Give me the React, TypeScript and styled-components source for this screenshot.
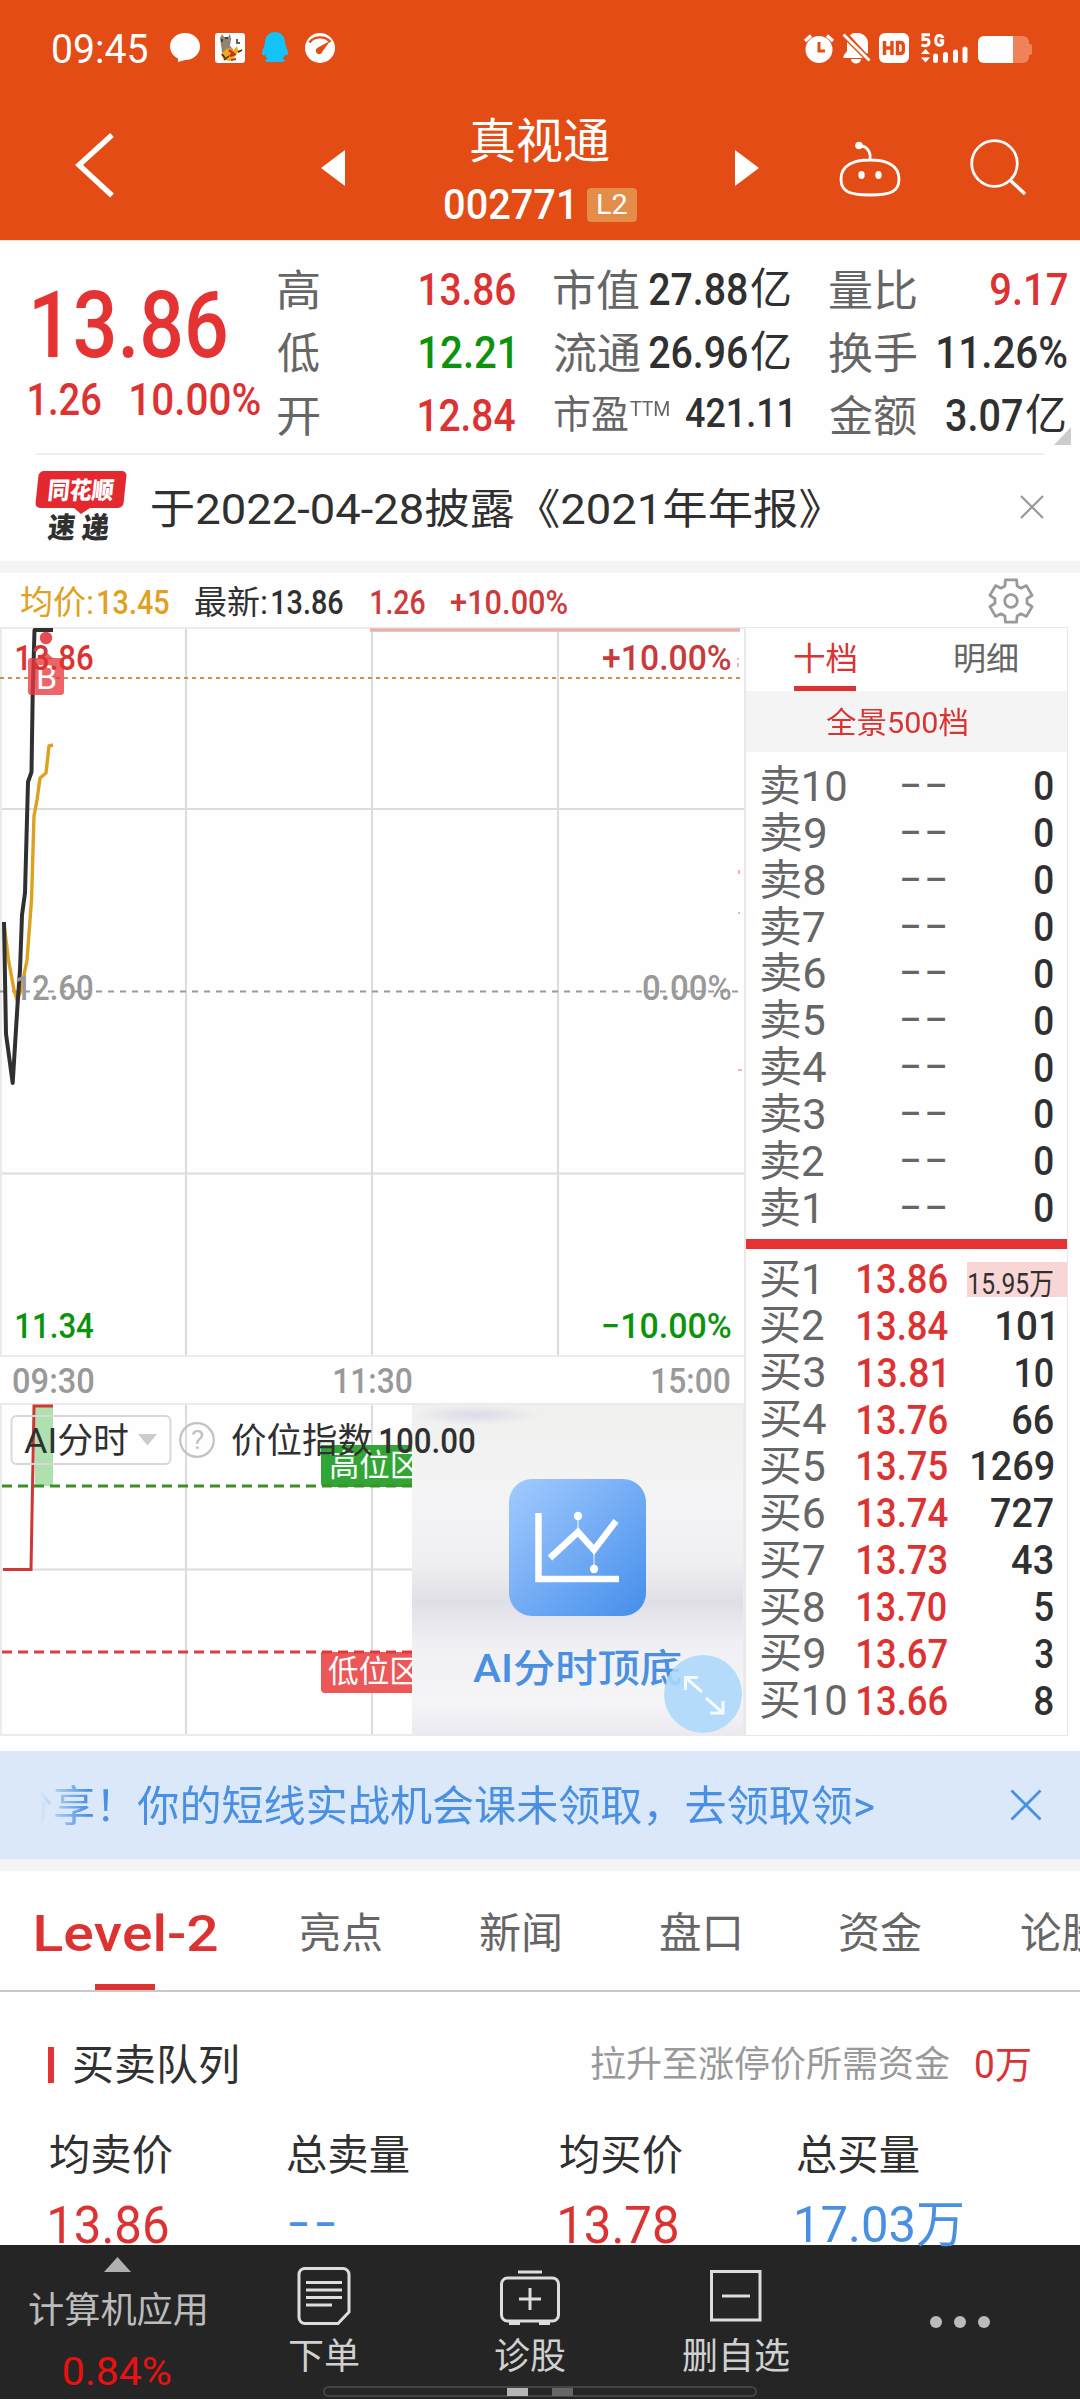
import React from "react";
import styled, { createGlobalStyle } from "styled-components";

const FAMILY = 'Roboto, "Noto Sans CJK SC", sans-serif';
const RED = "#dc3232";
const GREEN = "#0c930c";
const INK = "#303030";
const GREY = "#666";
const BLUE = "#4a90e2";

const GlobalStyle = createGlobalStyle`
  * { box-sizing: border-box; }
  body { margin: 0; background: #fff; font-family: ${FAMILY}; font-kerning: none; }
`;

/* ---------- width-fitted text ---------- */

const FitBox = styled.span<{ $w: number; $size: number; $ml: number; $mt: number }>`
  display: block;
  flex: none;
  width: ${(p) => p.$w}px;
  height: ${(p) => p.$size}px;
  margin-left: ${(p) => p.$ml}px;
  margin-top: ${(p) => p.$mt}px;
`;
const FitInk = styled.span<{ $size: number; $wt: number; $c: string }>`
  display: inline-block;
  white-space: pre;
  transform-origin: 0 50%;
  font-family: ${FAMILY};
  font-size: ${(p) => p.$size}px;
  line-height: ${(p) => p.$size}px;
  font-weight: ${(p) => p.$wt};
  color: ${(p) => p.$c};
`;

let ctx: CanvasRenderingContext2D | null = null;
function inkOf(text: string, size: number, wt: number) {
  if (!ctx) ctx = document.createElement("canvas").getContext("2d");
  if (!ctx) return { left: 0, width: text.length * size * 0.56 };
  ctx.font = `${wt} ${size}px ${FAMILY}`;
  ctx.fontKerning = "none";
  const m = ctx.measureText(text);
  return { left: m.actualBoundingBoxLeft, width: m.actualBoundingBoxLeft + m.actualBoundingBoxRight };
}

type FitProps = { t: string; w: number; size: number; wt?: number; c?: string; ml?: number; mt?: number; skew?: number };
function Fit({ t, w, size, wt = 400, c = INK, ml = 0, mt = 0, skew = 0 }: FitProps) {
  const ink = inkOf(t, size, wt);
  const s = w / ink.width;
  return (
    <FitBox $w={w} $size={size} $ml={ml} $mt={mt}>
      <FitInk
        $size={size}
        $wt={wt}
        $c={c}
        style={{ transform: `translateX(${ink.left * s}px) skewX(${-skew}deg) scaleX(${s})` }}
      >
        {t}
      </FitInk>
    </FitBox>
  );
}

/* ---------- shell ---------- */

const Screen = styled.div`
  width: 1080px;
  height: 2400px;
  overflow: hidden;
  background: #fefefe;
  display: flex;
  flex-direction: column;
`;
const Band = styled.div`
  flex: none;
  height: 12px;
  background: #f4f4f4;
`;
const Line = styled.div`
  flex: none;
  height: 2px;
  margin: 0 36px;
  background: #eee;
`;

/* ---------- header ---------- */

const Header = styled.header`
  flex: none;
  height: 241px;
  background: #e44c15;
  border-bottom: 1px solid #fde4d4;
`;
const StatusBar = styled.div`
  height: 96px;
  display: flex;
  align-items: center;
  padding: 0 48px 0 53px;
`;
const StatusIcons = styled.svg<{ $ml: number }>`
  display: block;
  flex: none;
  margin-left: ${(p) => p.$ml}px;
`;
const TitleBar = styled.div`
  height: 144px;
  padding-top: 2px;
  display: flex;
  align-items: flex-start;
`;
const Glyph = styled.svg<{ $ml?: number; $mt?: number }>`
  display: block;
  flex: none;
  margin-left: ${(p) => p.$ml ?? 0}px;
  margin-top: ${(p) => p.$mt ?? 0}px;
`;
const TitleStack = styled.div`
  flex: none;
  width: 192px;
  margin-left: 100px;
  padding-top: 20px;
  display: flex;
  flex-direction: column;
`;
const CodeRow = styled.div`
  display: flex;
  align-items: center;
  height: 34px;
  margin-top: 22px;
`;
const LevelBadge = styled.span`
  width: 50px;
  height: 34px;
  margin-left: 16px;
  border-radius: 4px;
  background: #e38d49;
  display: flex;
  align-items: center;
  justify-content: center;
`;

function StatusLeft() {
  return (
    <StatusIcons $ml={23} width="166" height="32" viewBox="170 32 166 32">
      <path d="M185 33c8.500 0 15 6 15 13.500S193.500 60 185 60L178 62v-3.500c-5-2.500-8-7-8-12C170 39 176.500 33 185 33z" fill="#fff" />
      <rect x="215" y="33" width="30" height="30" rx="3" fill="#fff" />
      <path d="M220 38l2-4 2 3h4l2-3 1 5-1 7 3 3-1 4-7 2-3-3z" fill="#8f8372" />
      <path d="M226 49l5-1 2 3 4-5 1 4 3 2-4 1-3 5-4 3-6-1-3-5z" fill="#f0a81c" />
      <path d="M229 50l4 3-3 3 6-2M231 60l5-1" stroke="#c4321c" strokeWidth="2.200" fill="none" />
      <path d="M222 39v3M225 38h3M237 39v3M236 43h4M224 60l5-4M222 54l3 4M238 52l4-2" stroke="#3a2a20" strokeWidth="1.500" fill="none" />
      <path d="M275 32c6 0 10 4.500 10 10.500 0 3.500 3 7 3 11 0 2-1.500 2.500-3 1-.5 1.500-1.500 3-2.500 4 3 1 3 3.500 0 3.500h-15c-3 0-3-2.500 0-3.500-1-1-2-2.500-2.500-4-1.500 1.500-3 1-3-1 0-4 3-7.500 3-11C265 36.500 269 32 275 32z" fill="#12c3f8" />
      <circle cx="320" cy="48" r="15" fill="#fff" />
      <path d="M309.500 42.500c4-6 15-7.500 21-.5" stroke="#e44c15" strokeWidth="2.400" fill="none" />
      <path d="M330 41l-7.500 10.500a3.400 3.400 0 1 1-4.500-4z" fill="#e44c15" />
    </StatusIcons>
  );
}

function StatusRight() {
  return (
    <StatusIcons $ml={467} width="230" height="32" viewBox="803 32 230 32">
      <circle cx="819" cy="49.500" r="13.500" fill="#fff" />
      <path d="M805 41l6-5.500M833 41l-6-5.500" stroke="#fff" strokeWidth="3.200" />
      <path d="M819 42v9h6" stroke="#e44c15" strokeWidth="3" fill="none" />
      <path d="M850 35.500c2-2 3-2.500 5-2.500h4c5 1 9 5 9 10v10l-1.500.5z" fill="#fff" />
      <path d="M847 42l16 16h-18c-2 0-2-2-.5-3.500l2.500-3.500zM851 59h10a5 4.500 0 0 1-10 0z" fill="#fff" />
      <path d="M843.500 34.500l26 26" stroke="#fff" strokeWidth="2.800" />
      <rect x="879" y="33" width="30" height="30" rx="6" fill="#fff" />
      <path d="M884.500 41v14M892 41v14M884.500 48h7.500M897.500 42.500h2.500c2.500 0 3.300 1.200 3.300 3v5c0 1.800-.8 3-3.300 3h-2.500z" stroke="#e44c15" strokeWidth="3.400" fill="none" />
      <path d="M930 34.800h-7v4.700c5-1 6 .3 6 2.700 0 3.500-4 4.500-7.500 2.500M942.700 38c-.8-3.500-7-4-7 2.300s7 6 7 2.500v-2h-3" stroke="#fff" strokeWidth="3" fill="none" />
      <path d="M921 54l4.500-5 4.500 5zM921 57.500h9l-4.500 5z" fill="#fff" />
      <path d="M935.500 56v4.500M945.500 54.500v6M955.500 52v8.500M965 49v11.500" stroke="#fff" strokeWidth="5" strokeLinecap="round" />
      <rect x="978" y="36" width="51" height="27" rx="6" fill="#ef8258" />
      <rect x="1026" y="44" width="6" height="11" rx="2" fill="#ef8258" />
      <path d="M984 36h29v27h-29a6 6 0 0 1-6-6V42a6 6 0 0 1 6-6z" fill="#fff" />
    </StatusIcons>
  );
}

/* ---------- quote ---------- */

const Quote = styled.section`
  flex: none;
  height: 212px;
  display: flex;
  align-items: flex-start;
  padding-top: 17px;
`;
const PriceBlock = styled.div`
  flex: none;
  width: 277px;
  padding: 22px 0 0 29px;
`;
const ChangeRow = styled.div`
  display: flex;
  margin-top: 6px;
`;
const StatColumn = styled.div<{ $w: number; $mr: number }>`
  flex: none;
  width: ${(p) => p.$w}px;
  margin-right: ${(p) => p.$mr}px;
`;
const StatRow = styled.div`
  height: 63px;
  display: flex;
  align-items: center;
`;
const Spring = styled.span`
  flex: 1;
`;

/* ---------- news ---------- */

const News = styled.section`
  flex: none;
  height: 106px;
  display: flex;
  align-items: flex-start;
  padding: 16px 0 0 37px;
`;
const BrandMark = styled.div`
  flex: none;
  width: 88px;
`;
const BrandTop = styled.div`
  height: 37px;
  display: flex;
  align-items: center;
  justify-content: center;
  border-radius: 5px;
  background: #e3292f;
  transform: skewX(-6deg);
`;

/* ---------- chart + book ---------- */

const Legend = styled.div`
  flex: none;
  height: 54px;
  display: flex;
  align-items: center;
`;
const Main = styled.section`
  flex: none;
  height: 1124px;
  display: flex;
`;
const ChartSide = styled.div`
  flex: none;
  width: 744px;
`;
const Chart = styled.svg`
  display: block;
`;
const Book = styled.div`
  flex: none;
  width: 324px;
  height: 1109px;
  border: 1px solid #e8e8e8;
  border-left-width: 2px;
`;
const BookTabs = styled.div`
  height: 63px;
  display: flex;
`;
const BookTab = styled.div<{ $ml: number; $active?: boolean }>`
  flex: none;
  width: 62px;
  margin-left: ${(p) => p.$ml}px;
  padding-top: 15px;
  border-bottom: ${(p) => (p.$active ? `5px solid ${RED}` : "none")};
`;
const Depth = styled.div`
  height: 61px;
  background: #f4f4f4;
  display: flex;
  align-items: center;
`;
const Rows = styled.div<{ $pt: number }>`
  padding-top: ${(p) => p.$pt}px;
`;
const BookRow = styled.div`
  height: 46.87px;
  display: flex;
  align-items: center;
  padding-left: 15px;
`;
const LabelCell = styled.div`
  flex: none;
  width: 97px;
`;
const PriceCell = styled.div<{ $dash?: boolean }>`
  flex: none;
  width: 109px;
  padding-left: ${(p) => (p.$dash ? 44 : 0)}px;
`;
const DashPair = styled.div<{ $gap: number; $pl?: number }>`
  display: flex;
  gap: ${(p) => p.$gap}px;
  padding-left: ${(p) => p.$pl ?? 0}px;
`;
const QtyCell = styled.div<{ $hot?: boolean }>`
  flex: none;
  width: 100px;
  height: ${(p) => (p.$hot ? 35 : 44)}px;
  padding-right: 14px;
  background: ${(p) => (p.$hot ? "#f9d6d6" : "transparent")};
  display: flex;
  align-items: center;
  justify-content: flex-end;
`;
const Divider = styled.div`
  height: 10px;
  margin-top: 7px;
  background: #e53333;
`;

const sells: [string, number][] = [
  ["卖10", 85], ["卖9", 64], ["卖8", 64], ["卖7", 63], ["卖6", 64],
  ["卖5", 63], ["卖4", 65], ["卖3", 63], ["卖2", 63], ["卖1", 55],
];
const buys: [string, number, string, number, string, number][] = [
  ["买1", 55, "13.86", 89, "15.95万", 84],
  ["买2", 63, "13.84", 90, "101", 56],
  ["买3", 63, "13.81", 86, "10", 37],
  ["买4", 65, "13.76", 89, "66", 40],
  ["买5", 63, "13.75", 89, "1269", 81],
  ["买6", 63, "13.74", 90, "727", 62],
  ["买7", 63, "13.73", 89, "43", 41],
  ["买8", 63, "13.70", 88, "5", 18],
  ["买9", 63, "13.67", 89, "3", 18],
  ["买10", 85, "13.66", 89, "8", 18],
];

type SvgTextProps = { x: number; y: number; w: number; s: number; c: string; wt?: number; children: string };
function Label({ x, y, w, s, c, wt = 500, children }: SvgTextProps) {
  const ink = inkOf(children, s, wt);
  const k = w / ink.width;
  return (
    <text transform={`translate(${x + ink.left * k} ${y}) scale(${k} 1)`} fontSize={s} fontWeight={wt} fill={c} fontFamily={FAMILY}>
      {children}
    </text>
  );
}

function MinuteChart() {
  return (
    <Chart width="744" height="776" viewBox="0 627 744 776">
      <g stroke="#dcdcdc" strokeWidth="2" fill="none">
        <path d="M186 628V1356M372 628V1356M558 628V1356M1 809H744M1 1173.500H744" />
        <path d="M0 628H744M1 628V1356M0 1356H744" stroke="#ebebeb" />
      </g>
      <path d="M0 678H740" stroke="#c4924e" strokeWidth="2" strokeDasharray="4 4" />
      <path d="M0 991.500H744" stroke="#999" strokeWidth="2" strokeDasharray="6 6" />
      <path d="M370 630H740" stroke="#e9b0b0" strokeWidth="3.500" />
      <path d="M4 924L8.500 960L14 990L17 1000L21 990L27 960L31.500 900L34 816L37 800L40 778L46 773L49 746L53 745" stroke="#dda020" strokeWidth="3.400" fill="none" strokeLinejoin="round" />
      <path d="M4 922L6 1034L12.700 1083L17.500 1005L20 970L22 915L25 893L28 782L31.500 772L32.700 694L34.500 630H53" stroke="#303030" strokeWidth="4" fill="none" strokeLinejoin="round" />
      <path d="M738 658v2M738 663v4M739 870v4M739 912v2M738 1070h4" stroke="#efb6b6" strokeWidth="2" />
      <circle cx="46" cy="638" r="6.200" fill="#e84c52" />
      <path d="M46 652l8 7H38z" fill="#ee6266" />
      <rect x="28" y="658" width="36" height="37" rx="3" fill="#e8393f" fillOpacity="0.780" />
      <Label x={38} y={689} w={18} s={34} c="#fff" wt={400}>B</Label>
      <Label x={16} y={670} w={77} s={35} c={RED}>13.86</Label>
      <Label x={603} y={670} w={128} s={35} c="#c93a3a">+10.00%</Label>
      <Label x={16} y={1000} w={77} s={35} c="#999">12.60</Label>
      <Label x={643} y={1000} w={88} s={35} c="#999">0.00%</Label>
      <Label x={16} y={1338} w={78} s={35} c={GREEN}>11.34</Label>
      <Label x={603} y={1338} w={128} s={35} c={GREEN}>−10.00%</Label>
      <Label x={13} y={1393} w={81} s={35} c="#999">09:30</Label>
      <Label x={334} y={1393} w={78} s={35} c="#999">11:30</Label>
      <Label x={652} y={1393} w={78} s={35} c="#999">15:00</Label>
    </Chart>
  );
}

function IndexChart() {
  return (
    <Chart width="744" height="333" viewBox="0 1403 744 333">
      <defs>
        <linearGradient id="tile" x1="0" y1="0" x2="1" y2="1">
          <stop offset="0" stopColor="#a3cbfe" />
          <stop offset="1" stopColor="#448eec" />
        </linearGradient>
        <linearGradient id="promo" x1="0" y1="0" x2="0" y2="1">
          <stop offset="0" stopColor="#f0f0ee" />
          <stop offset="0.300" stopColor="#f4f4f6" />
          <stop offset="0.480" stopColor="#efeff2" />
          <stop offset="0.600" stopColor="#dfdfe6" />
          <stop offset="0.720" stopColor="#f0eff3" />
          <stop offset="0.900" stopColor="#f5f4f7" />
          <stop offset="1" stopColor="#eceaf0" />
        </linearGradient>
        <radialGradient id="haze">
          <stop offset="0" stopColor="#dcdae8" />
          <stop offset="1" stopColor="#dcdae8" stopOpacity="0" />
        </radialGradient>
      </defs>
      <g stroke="#dcdcdc" strokeWidth="2" fill="none">
        <path d="M186 1404V1735M372 1404V1735M1 1569.500H744" />
        <path d="M0 1404H744M1 1404V1735M0 1735H744M743 1404V1735" stroke="#ebebeb" />
      </g>
      <rect x="35" y="1406" width="18" height="80" fill="#6cc96c" fillOpacity="0.550" />
      <path d="M321 1445H412V1487H325a4 4 0 0 1-4-4z" fill="#31a634" />
      <path d="M321 1652H412V1693H325a4 4 0 0 1-4-4z" fill="#ec5858" />
      <path d="M2 1486H412" stroke="#3c8f28" strokeWidth="3" strokeDasharray="10 6" />
      <path d="M2 1652H412" stroke="#dc3c3c" strokeWidth="3" strokeDasharray="10 6" />
      <path d="M3 1569.500H31L34 1406H53" stroke="#cf3636" strokeWidth="3" fill="none" />
      <Label x={330} y={1476} w={89} s={31} c="#fff" wt={400}>高位区</Label>
      <Label x={328} y={1682} w={91} s={31} c="#fff" wt={400}>低位区</Label>
      <rect x="412" y="1405" width="331" height="329" fill="url(#promo)" />
      <path d="M412 1405H540V1425H412z" fill="url(#haze)" />
      <rect x="509" y="1479" width="137" height="137" rx="23" fill="url(#tile)" />
      <g fill="none" stroke="#fff">
        <path d="M538.500 1513V1579H619" strokeWidth="6.500" />
        <path d="M550 1558L578 1532L594 1550L616 1521" strokeWidth="6.500" />
        <path d="M578 1516V1532M594 1550V1568" strokeWidth="1.600" strokeOpacity="0.600" />
      </g>
      <circle cx="578" cy="1516" r="4.200" fill="#fff" />
      <circle cx="594" cy="1569" r="4.200" fill="#fff" />
      <Label x={473} y={1682} w={208} s={39} c={BLUE}>AI分时顶底</Label>
      <circle cx="703" cy="1694" r="39" fill="#abd8fa" fillOpacity="0.880" />
      <path d="M702 1692L686 1678M685.500 1690V1677.500H698M706 1698L722 1712M723 1701V1713H710" stroke="#f2fbfe" strokeWidth="3" fill="none" />
      <rect x="11.500" y="1416" width="159" height="48" rx="5" fill="none" stroke="#d8d8d8" strokeWidth="2" />
      <Label x={24} y={1453} w={104} s={35} c={INK} wt={400}>AI分时</Label>
      <path d="M138 1434h19l-9.500 11.500z" fill="#ccc" />
      <circle cx="197" cy="1440" r="16.800" fill="none" stroke="#c2c2c2" strokeWidth="2.200" />
      <Label x={191} y={1449} w={13} s={26} c="#c2c2c2" wt={400}>?</Label>
      <Label x={232} y={1453} w={141} s={35} c={INK} wt={400}>价位指数</Label>
      <Label x={380} y={1453} w={95} s={35} c={INK}>100.00</Label>
    </Chart>
  );
}

function gearPath() {
  const pts: string[] = [];
  for (let k = 0; k < 6; k++) {
    const mid = k * 60 - 90;
    for (const [d, r] of [[-22, 16.2], [-15, 21.8], [15, 21.8], [22, 16.2]]) {
      const a = ((mid + d) * Math.PI) / 180;
      pts.push(`${(23 + r * Math.cos(a)).toFixed(1)} ${(23 + r * Math.sin(a)).toFixed(1)}`);
    }
  }
  return `M${pts.join("L")}Z`;
}

/* ---------- banner, tabs, queue ---------- */

const Banner = styled.section`
  flex: none;
  height: 108px;
  background: #dae8fa;
  display: flex;
  align-items: center;
`;
const Marquee = styled.div`
  flex: none;
  width: 838px;
  height: 60px;
  margin-left: 40px;
  overflow: hidden;
  display: flex;
  align-items: center;
  mask-image: linear-gradient(90deg, transparent 0, #000 48px);
`;
const Tabs = styled.nav`
  flex: none;
  height: 121px;
  display: flex;
  overflow: hidden;
  border-bottom: 2px solid #c9c9c9;
`;
const Tab = styled.div<{ $w: number; $ml: number }>`
  flex: none;
  width: ${(p) => p.$w}px;
  margin-left: ${(p) => p.$ml}px;
  display: flex;
  flex-direction: column;
  align-items: center;
  padding-top: 38px;
`;
const TabMark = styled.i`
  width: 60px;
  height: 6px;
  margin-top: auto;
  margin-right: 4px;
  background: ${RED};
`;
const QueueHead = styled.div`
  flex: none;
  height: 143px;
  display: flex;
  align-items: center;
  padding: 2px 0 0 48px;
`;
const QueueBar = styled.i`
  width: 6px;
  height: 36px;
  background: #e53333;
`;
const QueueLine = styled.div<{ $h: number }>`
  flex: none;
  height: ${(p) => p.$h}px;
  display: grid;
  grid-template-columns: 237px 273px 237px 1fr;
  padding-left: 50px;
`;

/* ---------- bottom bar ---------- */

const Bottom = styled.footer`
  flex: none;
  height: 154px;
  background: #252525;
  display: flex;
  flex-direction: column;
`;
const Actions = styled.div`
  height: 141px;
  display: flex;
  align-items: flex-start;
`;
const Action = styled.div<{ $w: number; $ml: number; $pt: number }>`
  flex: none;
  width: ${(p) => p.$w}px;
  margin-left: ${(p) => p.$ml}px;
  padding-top: ${(p) => p.$pt}px;
  display: flex;
  flex-direction: column;
  align-items: center;
`;
const Handle = styled.div`
  width: 434px;
  height: 11px;
  margin-left: 323px;
  border: 2px solid #444;
  border-radius: 6px;
  display: flex;
  gap: 24px;
  padding-left: 182px;
`;
const HandleBlock = styled.i<{ $c: string }>`
  width: 21px;
  height: 8px;
  background: ${(p) => p.$c};
`;

export default function App() {
  return (
    <Screen>
      <GlobalStyle />
      <Header>
        <StatusBar>
          <Fit t="09:45" w={94} size={40} c="#fff" mt={4} />
          <StatusLeft />
          <StatusRight />
        </StatusBar>
        <TitleBar>
          <Glyph $ml={74} $mt={34} width="42" height="66" viewBox="74 132 42 66">
            <path d="M112 135L79 165L112 195.500" fill="none" stroke="#fff" strokeWidth="5.400" />
          </Glyph>
          <Glyph $ml={205} $mt={52} width="24" height="36" viewBox="0 0 24 36">
            <path d="M24 0V36L0 18z" fill="#fff" />
          </Glyph>
          <TitleStack>
            <Fit t="真视通" w={138} size={48} c="#fff" ml={26} />
            <CodeRow>
              <Fit t="002771" w={126} size={42} wt={500} c="#fff" />
              <LevelBadge>
                <Fit t="L2" w={29} size={28} c="#fff" />
              </LevelBadge>
            </CodeRow>
          </TitleStack>
          <Glyph $ml={98} $mt={52} width="24" height="36" viewBox="0 0 24 36">
            <path d="M0 0V36L24 18z" fill="#fff" />
          </Glyph>
          <Glyph $ml={79} $mt={42} width="64" height="58" viewBox="838 140 64 58">
            <g fill="none" stroke="#fff" strokeWidth="2.800">
              <path d="M870 160c16 0 29 5 29 19 0 12-7 16-29 16s-29-4-29-16c0-14 13-19 29-19zM870 159c1-7-3-13-10-13" />
            </g>
            <circle cx="859" cy="145.500" r="3.800" fill="#fff" />
            <ellipse cx="861.500" cy="175" rx="3.200" ry="4" fill="#fff" />
            <ellipse cx="878.500" cy="175" rx="3.200" ry="4" fill="#fff" />
          </Glyph>
          <Glyph $ml={66} $mt={40} width="60" height="60" viewBox="968 138 60 60">
            <circle cx="994.500" cy="163.500" r="22.800" fill="none" stroke="#fff" strokeWidth="2.800" />
            <path d="M1010 180L1025 194" stroke="#fff" strokeWidth="3.400" />
          </Glyph>
        </TitleBar>
      </Header>

      <Quote>
        <PriceBlock>
          <Fit t="13.86" w={192} size={92} wt={500} c="#e53333" ml={5} />
          <ChangeRow>
            <Fit t="1.26" w={72} size={44} wt={500} c={RED} />
            <Fit t="10.00%" w={129} size={44} wt={500} c={RED} ml={30} />
          </ChangeRow>
        </PriceBlock>
        <StatColumn $w={238} $mr={39}>
          <StatRow><Fit t="高" w={41} size={43} c={GREY} ml={1} mt={3} /><Spring /><Fit t="13.86" w={95} size={45} wt={500} c={RED} /></StatRow>
          <StatRow><Fit t="低" w={42} size={43} c={GREY} mt={3} /><Spring /><Fit t="12.21" w={92} size={45} wt={500} c={GREEN} /><Fit t=" " w={3} size={10} /></StatRow>
          <StatRow><Fit t="开" w={41} size={43} c={GREY} ml={1} mt={3} /><Spring /><Fit t="12.84" w={96} size={45} wt={500} c={RED} /></StatRow>
        </StatColumn>
        <StatColumn $w={236} $mr={39}>
          <StatRow><Fit t="市值" w={85} size={43} c={GREY} mt={3} /><Spring /><Fit t="27.88" w={98} size={45} wt={500} /><Fit t="亿" w={39} size={43} ml={4} mt={-1} /></StatRow>
          <StatRow><Fit t="流通" w={86} size={43} c={GREY} mt={3} /><Spring /><Fit t="26.96" w={98} size={45} wt={500} /><Fit t="亿" w={39} size={43} ml={4} mt={-1} /></StatRow>
          <StatRow><Fit t="市盈" w={74} size={39} c={GREY} /><Fit t="TTM" w={39} size={20} c={GREY} ml={2} mt={-14} /><Spring /><Fit t="421.11" w={104} size={40} wt={500} mt={-4} /></StatRow>
        </StatColumn>
        <StatColumn $w={238} $mr={0}>
          <StatRow><Fit t="量比" w={86} size={43} c={GREY} ml={1} mt={3} /><Spring /><Fit t="9.17" w={76} size={45} wt={500} c={RED} /></StatRow>
          <StatRow><Fit t="换手" w={87} size={43} c={GREY} mt={3} /><Spring /><Fit t="11.26%" w={129} size={45} wt={500} /></StatRow>
          <StatRow><Fit t="金额" w={86} size={43} c={GREY} ml={1} mt={3} /><Spring /><Fit t="3.07" w={76} size={45} wt={500} /><Fit t="亿" w={39} size={43} ml={4} mt={-1} /><Fit t=" " w={2} size={10} /></StatRow>
        </StatColumn>
        <Glyph $ml={-13} $mt={169} width="17" height="18" viewBox="0 0 17 18">
          <path d="M17 0V18H0z" fill="#ccc" />
        </Glyph>
      </Quote>
      <Line />

      <News>
        <BrandMark>
          <BrandTop><Fit t="同花顺" w={65} size={24} wt={900} c="#fff" mt={2} /></BrandTop>
          <Glyph $ml={37} width="16" height="6" viewBox="0 0 16 6"><path d="M0 0H16L7 6z" fill="#e3292f" /></Glyph>
          <Fit t="速 递" w={61} size={29} wt={900} ml={11} skew={6} />
        </BrandMark>
        <Fit t="于2022-04-28披露《2021年年报》" w={668} size={42} ml={27} mt={18} />
        <Glyph $ml={200} $mt={24} width="24" height="24" viewBox="0 0 24 24">
          <path d="M1 1L23 23M23 1L1 23" stroke="#999" strokeWidth="2.200" />
        </Glyph>
      </News>
      <Band />

      <Legend>
        <Fit t="均价:" w={71} size={33} c="#e0a020" ml={21} mt={4} />
        <Fit t="13.45" w={71} size={33} wt={500} c="#e0a020" ml={6} mt={5} />
        <Fit t="最新:" w={71} size={33} ml={26} mt={4} />
        <Fit t="13.86" w={71} size={33} wt={500} ml={6} mt={5} />
        <Fit t="1.26" w={54} size={33} wt={500} c="#cc3a3a" ml={28} mt={5} />
        <Fit t="+10.00%" w={116} size={33} wt={500} c="#cc3a3a" ml={26} mt={5} />
        <Glyph $ml={421} $mt={2} width="46" height="46" viewBox="0 0 46 46">
          <path d={gearPath()} fill="none" stroke="#999" strokeWidth="2.800" strokeLinejoin="round" />
          <circle cx="23" cy="23" r="6.300" fill="none" stroke="#999" strokeWidth="2.800" />
        </Glyph>
      </Legend>

      <Main>
        <ChartSide>
          <MinuteChart />
          <IndexChart />
        </ChartSide>
        <Book>
          <BookTabs>
            <BookTab $ml={48} $active><Fit t="十档" w={62} size={32} c={RED} /></BookTab>
            <BookTab $ml={99}><Fit t="明细" w={62} size={32} c={GREY} /></BookTab>
          </BookTabs>
          <Depth><Fit t="全景500档" w={141} size={30} c="#d83434" ml={80} mt={3} /></Depth>
          <Rows $pt={11.5}>
            {sells.map(([name, w]) => (
              <BookRow key={name}>
                <LabelCell><Fit t={name} w={w} size={42} c={GREY} /></LabelCell>
                <PriceCell $dash>
                  <DashPair $gap={8}>
                    <Fit t="–" w={17} size={42} c={GREY} />
                    <Fit t="–" w={18} size={42} c={GREY} />
                  </DashPair>
                </PriceCell>
                <QtyCell><Fit t="0" w={18} size={41} wt={500} /></QtyCell>
              </BookRow>
            ))}
          </Rows>
          <Divider />
          <Rows $pt={7}>
            {buys.map(([name, w, price, pw, qty, qw], i) => (
              <BookRow key={name}>
                <LabelCell><Fit t={name} w={w} size={42} c={GREY} /></LabelCell>
                <PriceCell><Fit t={price} w={pw} size={41} wt={500} c={RED} /></PriceCell>
                <QtyCell $hot={i === 0}><Fit t={qty} w={qw} size={i === 0 ? 30 : 41} wt={i === 0 ? 400 : 500} mt={i === 0 ? 9 : 0} /></QtyCell>
              </BookRow>
            ))}
          </Rows>
        </Book>
      </Main>

      <Banner>
        <Marquee>
          <Fit t="分享！你的短线实战机会课未领取，去领取领>" w={862} size={42} c={BLUE} ml={-28} mt={4} />
        </Marquee>
        <Glyph $ml={132} width="32" height="32" viewBox="0 0 32 32">
          <path d="M1.500 1.500L30.500 30.500M30.500 1.500L1.500 30.500" stroke={BLUE} strokeWidth="2.800" />
        </Glyph>
      </Banner>
      <Band />

      <Tabs>
        <Tab $w={181} $ml={36}><Fit t="Level-2" w={181} size={50} wt={500} c={RED} /><TabMark /></Tab>
        <Tab $w={81} $ml={83}><Fit t="亮点" w={80} size={42} c={GREY} mt={4} /></Tab>
        <Tab $w={81} $ml={98}><Fit t="新闻" w={80} size={42} c={GREY} mt={4} /></Tab>
        <Tab $w={81} $ml={99}><Fit t="盘口" w={79} size={42} c={GREY} mt={4} /></Tab>
        <Tab $w={81} $ml={100}><Fit t="资金" w={81} size={42} c={GREY} mt={4} /></Tab>
        <Tab $w={81} $ml={100}><Fit t="论股" w={81} size={42} c={GREY} mt={4} /></Tab>
      </Tabs>

      <QueueHead>
        <QueueBar />
        <Fit t="买卖队列" w={163} size={42} ml={20} mt={2} />
        <Fit t="拉升至涨停价所需资金" w={358} size={36} c="#999" ml={354} mt={1} />
        <Fit t="0万" w={54} size={38} c="#d83434" ml={27} mt={1} />
      </QueueHead>
      <QueueLine $h={65}>
        <Fit t="均卖价" w={122} size={42} />
        <Fit t="总卖量" w={122} size={42} />
        <Fit t="均买价" w={122} size={42} />
        <Fit t="总买量" w={122} size={42} />
      </QueueLine>
      <QueueLine $h={45}>
        <Fit t="13.86" w={118} size={51} c={RED} />
        <DashPair $gap={10} $pl={3}>
          <Fit t="–" w={17} size={51} c={BLUE} />
          <Fit t="–" w={17} size={51} c={BLUE} />
        </DashPair>
        <Fit t="13.78" w={117} size={51} c={RED} />
        <Fit t="17.03万" w={165} size={50} c={BLUE} />
      </QueueLine>

      <Bottom>
        <Actions>
          <Action $w={176} $ml={29} $pt={12}>
            <Glyph width="27" height="15" viewBox="0 0 27 15"><path d="M13.500 0L27 15H0z" fill="#b0b0b0" /></Glyph>
            <Fit t="计算机应用" w={176} size={36} c="#bbb" mt={21} />
            <Fit t="0.84%" w={107} size={38} c="#e81212" mt={24} />
          </Action>
          <Action $w={70} $ml={84} $pt={21}>
            <Glyph width="54" height="60" viewBox="297 2267 54 60">
              <g fill="none" stroke="#ddd" strokeWidth="3">
                <path d="M304 2269.500H343a6 6 0 0 1 6 6V2313L338 2324.500H305a6 6 0 0 1-6-6V2275.500a6 6 0 0 1 5-6z" />
                <path d="M306 2283.500H342M306 2291H342M306 2298.500H342M306 2306H332" />
              </g>
            </Glyph>
            <Fit t="下单" w={70} size={36} c="#d0d0d0" mt={13} />
          </Action>
          <Action $w={70} $ml={136} $pt={24}>
            <Glyph width="62" height="57" viewBox="499 2270 62 57">
              <g fill="none" stroke="#ddd" strokeWidth="3">
                <rect x="501.500" y="2279" width="57" height="43" rx="6" />
                <path d="M518 2273H542M509 2324.500H520M539 2324.500H550M530 2289V2311M519 2300H541" />
              </g>
            </Glyph>
            <Fit t="诊股" w={70} size={36} c="#d0d0d0" mt={13} />
          </Action>
          <Action $w={106} $ml={118} $pt={25}>
            <Glyph width="52" height="52" viewBox="0 0 52 52">
              <path d="M1.500 1.500H50V50H1.500zM12 26H40" fill="none" stroke="#ddd" strokeWidth="3" />
            </Glyph>
            <Fit t="删自选" w={106} size={36} c="#d0d0d0" mt={17} />
          </Action>
          <Action $w={62} $ml={140} $pt={71}>
            <Glyph width="62" height="12" viewBox="0 0 62 12">
              <g fill="#bbb"><circle cx="7" cy="6" r="6" /><circle cx="31" cy="6" r="6" /><circle cx="55" cy="6" r="6" /></g>
            </Glyph>
          </Action>
        </Actions>
        <Handle>
          <HandleBlock $c="#b5b5b5" />
          <HandleBlock $c="#666" />
        </Handle>
      </Bottom>
    </Screen>
  );
}
